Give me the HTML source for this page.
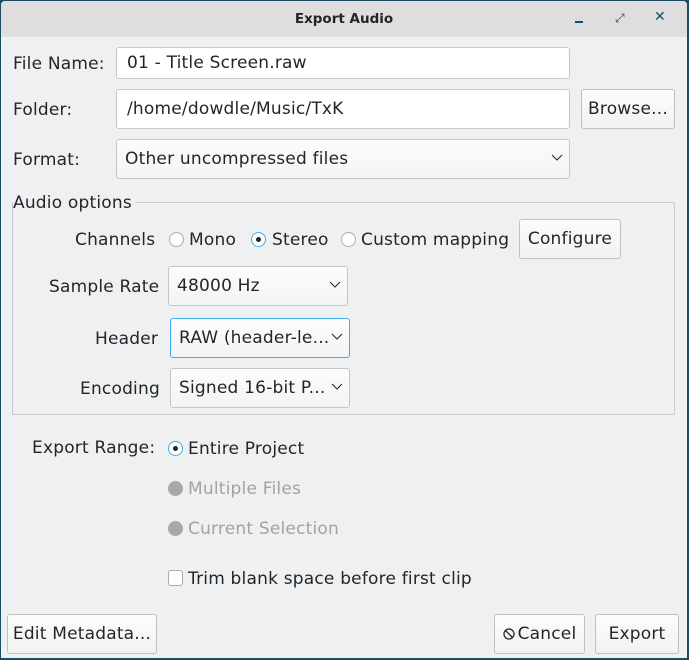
<!DOCTYPE html>
<html><head><meta charset="utf-8"><style>
*{box-sizing:border-box;margin:0;padding:0}
body{width:689px;height:660px;background:#1d4a66;font-family:"DejaVu Sans",sans-serif;font-size:17px;letter-spacing:0.2px;color:#232629;position:relative;overflow:hidden}
#win{position:absolute;left:1px;top:1px;width:686px;height:657px;background:#eff0f1;border-radius:4px 4px 0 0;overflow:hidden}
#title{position:absolute;left:0;top:0;width:100%;height:36px;background:#dedede;text-align:center;font-weight:bold;font-size:13.5px;letter-spacing:0;line-height:36px}
.a{position:absolute;white-space:nowrap}
.f{position:absolute;background:#fff;border:1px solid #c4c6c8;border-radius:3px;padding-left:10px;display:flex;align-items:center}
.b{position:absolute;background:linear-gradient(#fcfcfc,#f1f2f3);border:1px solid #bfc1c3;border-radius:3px;display:flex;align-items:center;justify-content:center}
.cb{position:absolute;background:linear-gradient(#fcfcfc,#f3f4f5);border:1px solid #c4c6c8;border-radius:3px;display:flex;align-items:center;padding-left:8px}
.chev{position:absolute;right:6px;top:50%;margin-top:-5px}
.r{position:absolute;width:15px;height:15px;border:1px solid #a9abad;border-radius:50%;background:#fff}
.r.on{border-color:#3daee9}
.r.on:after{content:"";position:absolute;left:4px;top:4px;width:5px;height:5px;border-radius:50%;background:#232629}
.r.dis{background:#a8a9aa;border-color:#a8a9aa}
</style></head><body>
<div id="win">
<div id="title">Export Audio</div>
<div class="a" style="left:574px;top:20px;width:8px;height:2px;background:#1d4a66"></div>
<div class="a" style="left:614px;top:10px;font-size:12px;color:#1d4a66">⤢</div>
<div class="a" style="left:653px;top:8px;font-size:14px;font-weight:bold;color:#1d4a66">✕</div>

<div class="a" style="left:12px;top:53px">File Name:</div>
<div class="f" style="left:115px;top:46px;width:454px;height:32px">01 - Title Screen.raw</div>
<div class="a" style="left:12px;top:99px">Folder:</div>
<div class="f" style="left:115px;top:88px;width:454px;height:40px">/home/dowdle/Music/TxK</div>
<div class="b" style="left:580px;top:88px;width:94px;height:40px">Browse...</div>
<div class="a" style="left:12px;top:149px">Format:</div>
<div class="cb" style="left:115px;top:138px;width:454px;height:40px">Other uncompressed files<svg class="chev" width="12" height="8"><path d="M1 1l5 5 5-5" stroke="#232629" fill="none"/></svg></div>

<div class="a" style="left:11px;top:201px;width:663px;height:213px;border:1px solid #c8cacc;border-radius:2px"></div>
<div class="a" style="left:12px;top:192px;background:#eff0f1;padding-right:4px">Audio options</div>
<div class="a" style="left:74px;top:229px">Channels</div>
<div class="r" style="left:168px;top:231px"></div><div class="a" style="left:188px;top:229px">Mono</div>
<div class="r on" style="left:250px;top:231px"></div><div class="a" style="left:271px;top:229px">Stereo</div>
<div class="r" style="left:340px;top:231px"></div><div class="a" style="left:360px;top:229px">Custom mapping</div>
<div class="b" style="left:518px;top:218px;width:102px;height:40px">Configure</div>
<div class="a" style="left:48px;top:276px">Sample Rate</div>
<div class="cb" style="left:167px;top:265px;width:180px;height:40px">48000 Hz<svg class="chev" width="12" height="8"><path d="M1 1l5 5 5-5" stroke="#232629" fill="none"/></svg></div>
<div class="a" style="left:94px;top:328px">Header</div>
<div class="cb" style="left:169px;top:317px;width:180px;height:40px;border-color:#3daee9">RAW (header-le...<svg class="chev" width="12" height="8"><path d="M1 1l5 5 5-5" stroke="#232629" fill="none"/></svg></div>
<div class="a" style="left:79px;top:378px">Encoding</div>
<div class="cb" style="left:169px;top:367px;width:180px;height:40px">Signed 16-bit P...<svg class="chev" width="12" height="8"><path d="M1 1l5 5 5-5" stroke="#232629" fill="none"/></svg></div>

<div class="a" style="left:31px;top:437px">Export Range:</div>
<div class="r on" style="left:167px;top:440px"></div><div class="a" style="left:187px;top:438px">Entire Project</div>
<div class="r dis" style="left:167px;top:480px"></div><div class="a" style="left:187px;top:478px;color:#a0a2a4">Multiple Files</div>
<div class="r dis" style="left:167px;top:520px"></div><div class="a" style="left:187px;top:518px;color:#a0a2a4">Current Selection</div>
<div class="a" style="left:167px;top:569px;width:15px;height:16px;border:1px solid #a9abad;border-radius:3px;background:#fff"></div>
<div class="a" style="left:187px;top:568px">Trim blank space before first clip</div>

<div class="b" style="left:6px;top:613px;width:150px;height:40px">Edit Metadata...</div>
<div class="b" style="left:493px;top:613px;width:91px;height:40px"><svg width="12" height="12" style="margin-right:3px"><circle cx="6" cy="6" r="5" stroke="#232629" fill="none" stroke-width="1.3"/><path d="M2.5 2.5l7 7" stroke="#232629" stroke-width="1.3"/></svg>Cancel</div>
<div class="b" style="left:594px;top:613px;width:84px;height:40px">Export</div>
</div>
</body></html>
